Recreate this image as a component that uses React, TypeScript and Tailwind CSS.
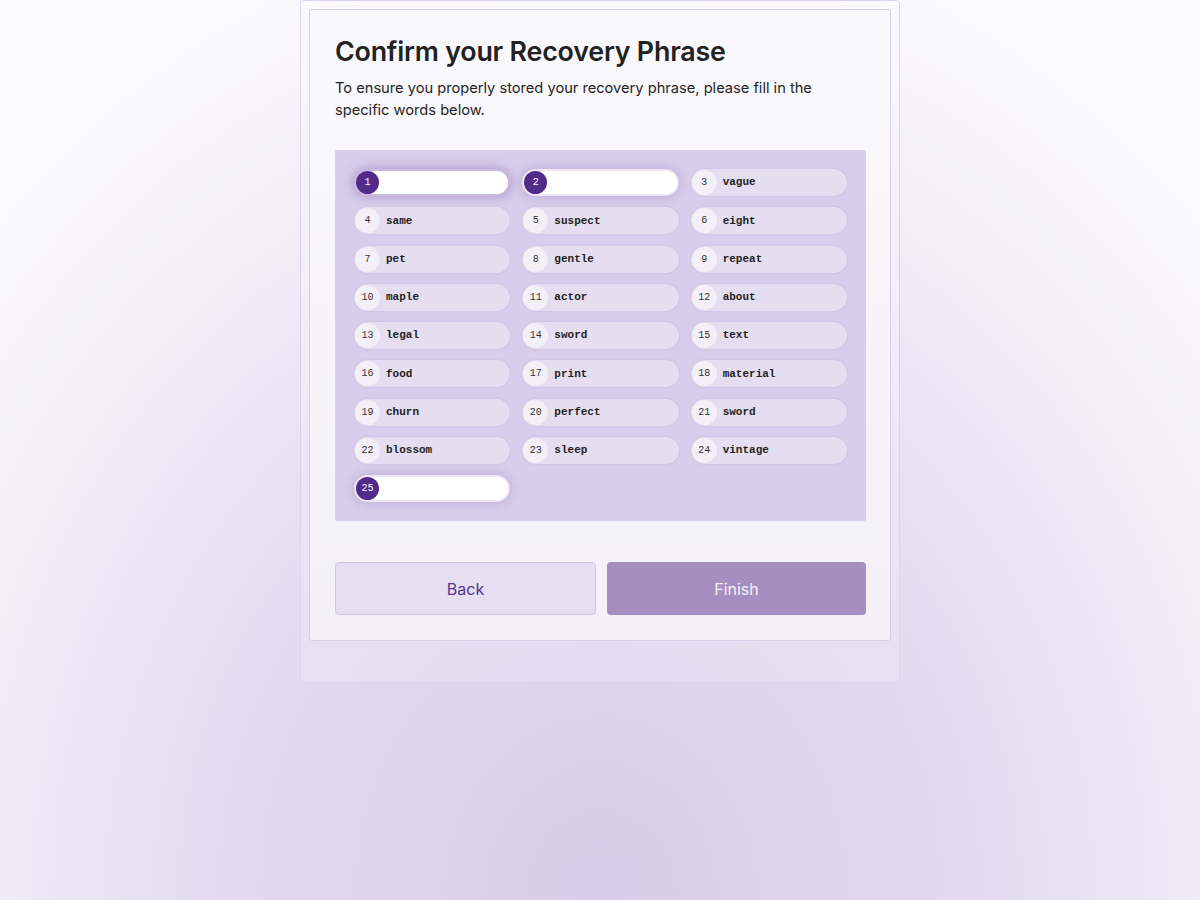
import React from 'react';

// words already shown; null means the user has to type it
const words: (string | null)[] = [
  null, null, 'vague',
  'same', 'suspect', 'eight',
  'pet', 'gentle', 'repeat',
  'maple', 'actor', 'about',
  'legal', 'sword', 'text',
  'food', 'print', 'material',
  'churn', 'perfect', 'sword',
  'blossom', 'sleep', 'vintage',
  null,
];

function WordPill({ index, word, focused }: { index: number; word: string | null; focused?: boolean }) {
  if (word === null) {
    return (
      <div
        className={
          'flex items-center h-[27px] rounded-full bg-white border-2 ' +
          (focused
            ? 'border-[#c9badf] shadow-[0_0_10px_2px_rgba(120,80,170,0.35)]'
            : 'border-[#ece6f5] shadow-[0_0_10px_2px_rgba(120,80,170,0.22)]')
        }
      >
        <span className="w-[23px] h-[23px] rounded-full bg-[#512a8a] text-white flex items-center justify-center text-[10px] font-['Liberation_Mono',monospace] shrink-0">
          {index}
        </span>
        <input className="flex-1 min-w-0 bg-transparent outline-none px-2 text-[11px]" />
      </div>
    );
  }
  return (
    <div className="flex items-center h-[27px] rounded-full bg-[#e5def0] shadow-[0_0_2px_rgba(140,110,190,0.25)]">
      <span className="ml-[1px] w-[25px] h-[25px] rounded-full bg-[#f3f0f8] text-[#333] flex items-center justify-center text-[10px] font-['Liberation_Mono',monospace] shrink-0">
        {index}
      </span>
      <span className="ml-[6px] text-[11px] font-bold text-[#222] font-['Liberation_Mono',monospace]">{word}</span>
    </div>
  );
}

export default function App() {
  return (
    <div className="min-h-screen w-full bg-[radial-gradient(ellipse_70%_110%_at_50%_100%,#d7cce9_0%,#e3daf0_45%,#f1edf7_75%,#fbfafd_100%)] font-['Inter','Liberation_Sans',sans-serif]">
      <div className="mx-auto w-[600px] border border-[#ddd2ee] rounded-[4px] bg-white/20 p-2 pb-[41px]">
        <div className="border border-[#d8cdea] rounded-[3px] bg-gradient-to-b from-[#faf9fd] to-[#f3f0f8] pl-[25px] pr-[24px] pt-[25px] pb-[25px]">
          <h1 className="text-[26.8px] leading-[32px] font-semibold text-[#222] tracking-[-0.2px]">Confirm your Recovery Phrase</h1>
          <p className="mt-[10px] text-[14.65px] leading-[22px] text-[#252525] pr-10">
            To ensure you properly stored your recovery phrase, please fill in the specific words below.
          </p>

          <div className="mt-[29px] bg-[#d8cdea] rounded-[2px] px-[19px] pt-[19px] pb-[19px] grid grid-cols-3 gap-x-[12px] gap-y-[11.3px]">
            {words.map((w, i) => (
              <WordPill key={i} index={i + 1} word={w} focused={i === 0} />
            ))}
          </div>

          <div className="mt-[41px] flex gap-[11px]">
            <button className="flex-1 h-[53px] rounded-[4px] border border-[#d2c6e6] bg-[#e6dff1] text-[#5a3590] text-[16px]">
              Back
            </button>
            <button className="flex-1 h-[53px] rounded-[4px] bg-[#a48fc0] text-[#f4f0f9] text-[16px]">
              Finish
            </button>
          </div>
        </div>
      </div>
    </div>
  );
}
